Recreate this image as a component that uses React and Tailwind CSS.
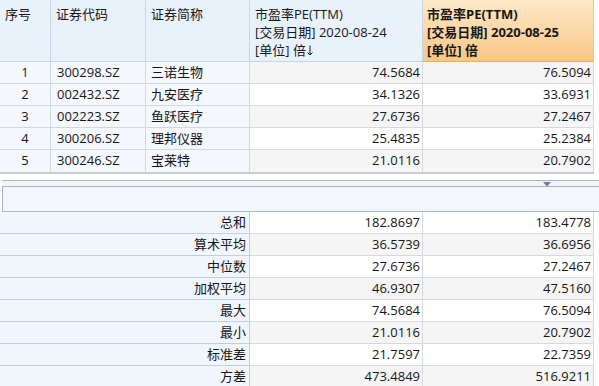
import React from 'react';

const rows = [
  ['1', '300298.SZ', '三诺生物', '74.5684', '76.5094'],
  ['2', '002432.SZ', '九安医疗', '34.1326', '33.6931'],
  ['3', '002223.SZ', '鱼跃医疗', '27.6736', '27.2467'],
  ['4', '300206.SZ', '理邦仪器', '25.4835', '25.2384'],
  ['5', '300246.SZ', '宝莱特', '21.0116', '20.7902'],
];

const stats = [
  ['总和', '182.8697', '183.4778'],
  ['算术平均', '36.5739', '36.6956'],
  ['中位数', '27.6736', '27.2467'],
  ['加权平均', '46.9307', '47.5160'],
  ['最大', '74.5684', '76.5094'],
  ['最小', '21.0116', '20.7902'],
  ['标准差', '21.7597', '22.7359'],
  ['方差', '473.4849', '516.9211'],
];

const cols = 'grid grid-cols-[51px_95px_104px_173px_171px]';

export default function App() {
  return (
    <div className="w-[599px] h-[386px] overflow-hidden bg-white text-[13px] text-[#161616] font-['Open_Sans','Noto_Sans_CJK_SC',sans-serif]">
      {/* header */}
      <div className={`${cols} h-[62px] leading-[18px]`}>
        <div className="bg-[#e9f1fb] border-r border-b border-[#c6d6ea] pl-[5px] pt-[5px]">序号</div>
        <div className="bg-[#e9f1fb] border-r border-b border-[#c6d6ea] pl-[5px] pt-[5px]">证券代码</div>
        <div className="bg-[#e9f1fb] border-r border-b border-[#c6d6ea] pl-[5px] pt-[5px]">证券简称</div>
        <div className="bg-[#e9f1fb] border-r border-b border-[#c6d6ea] pl-[5px] pt-[5px]">
          <div>市盈率PE(TTM)</div>
          <div>[交易日期] 2020-08-24</div>
          <div className="flex items-center">
            [单位] 倍
            <svg width="6" height="11" viewBox="0 0 6 11" className="ml-[1px]">
              <path d="M3 0.5 V10 M0.5 7.5 L3 10 L5.5 7.5" stroke="#161616" strokeWidth="1" fill="none" />
            </svg>
          </div>
        </div>
        <div className="bg-linear-to-b from-[#fde9c8] to-[#f9c684] border-r border-b border-r-[#e9c79a] border-b-[#eeae5c] pl-[4px] pt-[5px] font-bold">
          <div>市盈率PE(TTM)</div>
          <div>[交易日期] 2020-08-25</div>
          <div>[单位] 倍</div>
        </div>
      </div>

      {/* data rows */}
      <div className="border-b-2 border-[#c9cdd3] w-[594px]">
        {rows.map((r, i) => {
          const alt = i % 2 === 0 ? 'bg-[#f5f5f5]' : 'bg-white';
          const last = i === rows.length - 1;
          const bb = last ? '' : 'border-b';
          return (
            <div key={r[0]} className={`${cols} h-[22px] leading-[21px]`}>
              <div className={`bg-[#f4f8fc] border-r ${bb} border-[#cdd8e6] text-center`}>{r[0]}</div>
              <div className={`bg-[#f4f8fc] border-r ${bb} border-[#cdd8e6] pl-[6px]`}>{r[1]}</div>
              <div className={`bg-[#f4f8fc] border-r ${bb} border-[#cdd8e6] pl-[5px]`}>{r[2]}</div>
              <div className={`${alt} border-r ${bb} border-[#d6d9de] text-right pr-[2px]`}>{r[3]}</div>
              <div className={`${alt} border-r ${bb} border-[#d6d9de] text-right pr-[2px]`}>{r[4]}</div>
            </div>
          );
        })}
      </div>

      {/* splitter */}
      <div className="mt-[6px] ml-[2px] h-[7px] border-t border-b border-[#a9b3c2] bg-[#f1f4f8] flex justify-end pr-[48px]">
        <svg width="8" height="5" viewBox="0 0 8 5" className="mt-[1px]">
          <path d="M0 0 H8 L4 4.5 Z" fill="#6e7c92" />
        </svg>
      </div>

      {/* empty panel */}
      <div className="ml-[2px] h-[25px] border-l border-b border-[#aab6c6] bg-[#f3f7fc]" />

      {/* statistics */}
      <div className="w-[594px]">
        {stats.map((s, i) => {
          const alt = i % 2 === 1 ? 'bg-[#f5f5f5]' : 'bg-white';
          return (
            <div key={s[0]} className="grid grid-cols-[250px_173px_171px] h-[22px] leading-[21px]">
              <div className="bg-[#f0f6fc] border-r border-b border-[#c3cfde] text-right pr-[3px]">{s[0]}</div>
              <div className={`${alt} border-r border-b border-[#d6d9de] text-right pr-[2px]`}>{s[1]}</div>
              <div className={`${alt} border-r border-b border-[#d6d9de] text-right pr-[2px]`}>{s[2]}</div>
            </div>
          );
        })}
      </div>
    </div>
  );
}
